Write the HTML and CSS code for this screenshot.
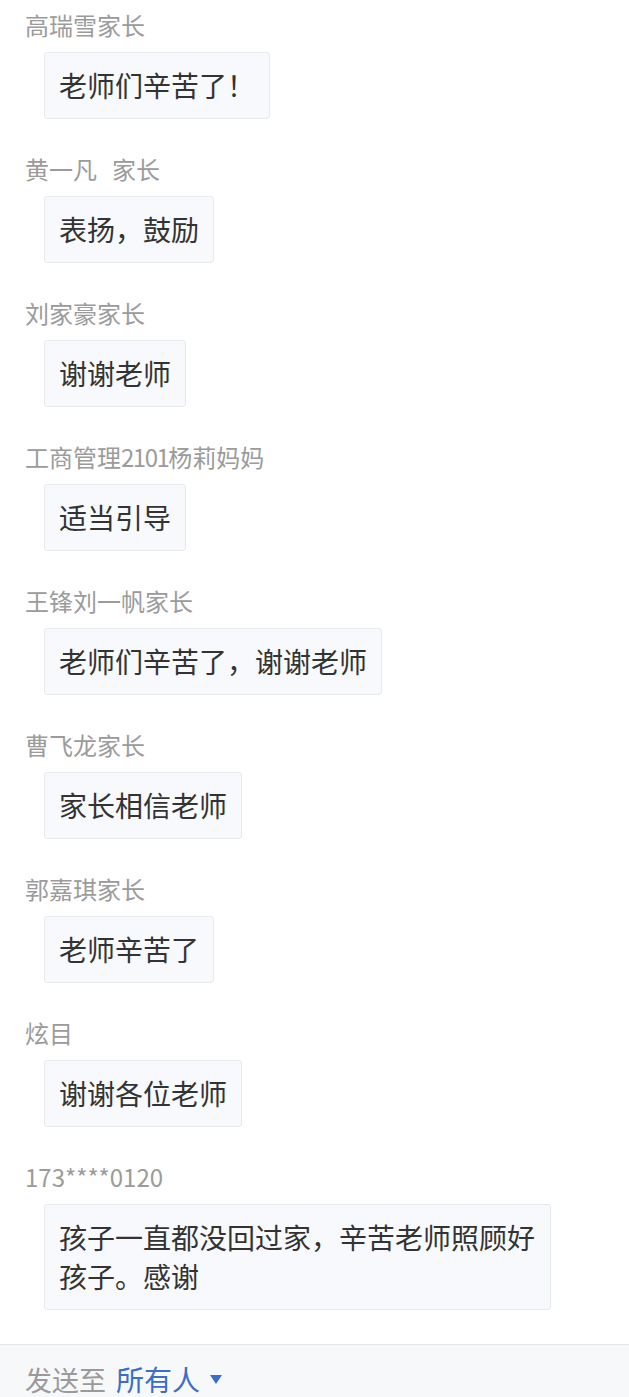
FILE: index.html
```html
<!DOCTYPE html>
<html lang="zh-CN">
<head>
<meta charset="utf-8">
<link rel="stylesheet" href="styles.css">
</head>
<body>
<div class="list">
  <div class="item"><div class="name">高瑞雪家长</div><div class="bubble">老师们辛苦了！</div></div>
  <div class="item"><div class="name">黄一凡<span class="gap"> </span>家长</div><div class="bubble">表扬，鼓励</div></div>
  <div class="item"><div class="name">刘家豪家长</div><div class="bubble">谢谢老师</div></div>
  <div class="item"><div class="name">工商管理<span class="num">2101</span>杨莉妈妈</div><div class="bubble">适当引导</div></div>
  <div class="item"><div class="name">王锋刘一帆家长</div><div class="bubble">老师们辛苦了，谢谢老师</div></div>
  <div class="item"><div class="name">曹飞龙家长</div><div class="bubble">家长相信老师</div></div>
  <div class="item"><div class="name">郭嘉琪家长</div><div class="bubble">老师辛苦了</div></div>
  <div class="item"><div class="name">炫目</div><div class="bubble">谢谢各位老师</div></div>
  <div class="item"><div class="name">173****0120</div><div class="bubble">孩子一直都没回过家，辛苦老师照顾好孩子。感谢</div></div>
</div>
<div class="footer">
  <span class="label">发送至</span>
  <span class="target">所有人</span>
  <span class="caret"></span>
</div>
</body>
</html>
```
FILE: styles.css
```css
html, body {
  margin: 0;
  padding: 0;
  background: #ffffff;
}
body {
  font-family: "Noto Sans CJK SC", "Noto Sans", sans-serif;
  width: 629px;
  height: 1397px;
  overflow: hidden;
}
.list {
  padding: 10px 0 0 0;
  display: flex;
  flex-direction: column;
}
.item {
  display: flex;
  flex-direction: column;
  align-items: flex-start;
  margin-bottom: 35px;
}
.name {
  margin-left: 25px;
  font-size: 24px;
  line-height: 30px;
  color: #9b9b9b;
  white-space: nowrap;
}
.gap {
  display: inline-block;
  width: 15px;
}
.num {
  letter-spacing: -1.5px;
}
.bubble {
  margin-top: 12px;
  margin-left: 44px;
  max-width: 477px;
  padding: 13px 14px;
  border: 1px solid #e6e9ee;
  border-radius: 3px;
  background: #f7f9fc;
  font-size: 28px;
  line-height: 39px;
  color: #333333;
}
.footer {
  position: absolute;
  left: 0;
  right: 0;
  top: 1344px;
  height: 53px;
  border-top: 1px solid #e3e5e8;
  background: #f7f8fa;
  display: flex;
  align-items: center;
  padding-left: 25px;
  padding-top: 16px;
  box-sizing: border-box;
}
.label {
  font-size: 27px;
  color: #9a9a9a;
  margin-right: 10px;
}
.target {
  font-size: 28px;
  color: #3a6ec8;
  margin-right: 10px;
}
.caret {
  width: 0;
  height: 0;
  border-left: 6.5px solid transparent;
  border-right: 6.5px solid transparent;
  border-top: 9px solid #3a6ec8;
}
```
